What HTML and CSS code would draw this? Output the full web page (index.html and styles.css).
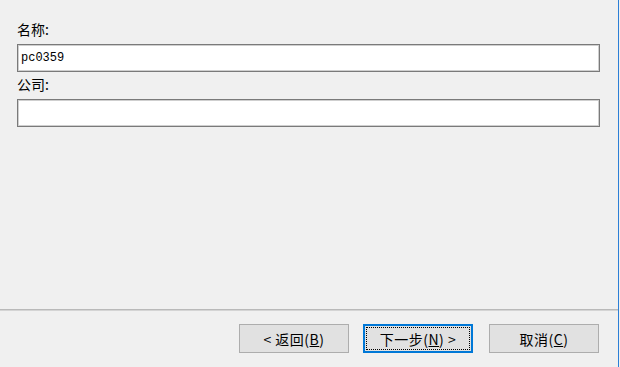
FILE: index.html
```html
<!DOCTYPE html>
<html lang="zh-CN">
<head>
    <meta charset="UTF-8">
    <meta name="viewport" content="width=device-width, initial-scale=1.0">
    <title>用户信息</title>
    <link rel="stylesheet" href="styles.css">
</head>
<body>
    <div class="wizard">
        <div class="wizard-body">
            <label class="field-label" for="name">名称:</label>
            <input class="field-input" type="text" id="name" value="pc0359">
            <label class="field-label" for="company">公司:</label>
            <input class="field-input" type="text" id="company" value="">
        </div>
        <div class="wizard-footer">
            <button class="btn">&lt; 返回(<u>B</u>)</button>
            <button class="btn btn-default">下一步(<u>N</u>) &gt;</button>
            <button class="btn btn-cancel">取消(<u>C</u>)</button>
        </div>
    </div>
</body>
</html>
```

FILE: styles.css
```css
* {
    margin: 0;
    padding: 0;
    box-sizing: border-box;
}

body {
    background: #f0f0f0;
    font-family: "Noto Sans CJK SC", "Liberation Sans", sans-serif;
    color: #000;
}

.wizard {
    width: 619px;
    height: 367px;
    border-right: 1px solid #2b7fd6;
    display: flex;
    flex-direction: column;
}

.wizard-body {
    flex: 1;
    padding: 17px 18px 0 17px;
}

.field-label {
    display: block;
    font-size: 14px;
    line-height: 20px;
    margin: 2px 0 5px;
}

.field-input {
    display: block;
    width: 583px;
    height: 28px;
    border: 1px solid #7a7a7a;
    box-shadow: inset 0 0 0 1px #cfcfcf;
    background: #fff;
    padding: 0 3px;
    font-family: "Liberation Mono", monospace;
    font-size: 12px;
    color: #000;
    outline: none;
}

.wizard-footer {
    border-top: 1px solid #b9b9b9;
    box-shadow: inset 0 1px 0 #d4d4d4;
    padding: 14px 19px 14px 0;
    display: flex;
    justify-content: flex-end;
    gap: 14px;
}

.btn {
    width: 110px;
    height: 29px;
    border: 1px solid #adadad;
    background: #e1e1e1;
    font-family: "Noto Sans CJK SC", "Liberation Sans", sans-serif;
    font-size: 14px;
    letter-spacing: 0.5px;
    color: #000;
    line-height: 1;
}

.btn-default {
    border: 2px solid #0078d7;
    outline: 1px dotted #000;
    outline-offset: -4px;
}

.btn-cancel {
    margin-left: 2px;
}
```
